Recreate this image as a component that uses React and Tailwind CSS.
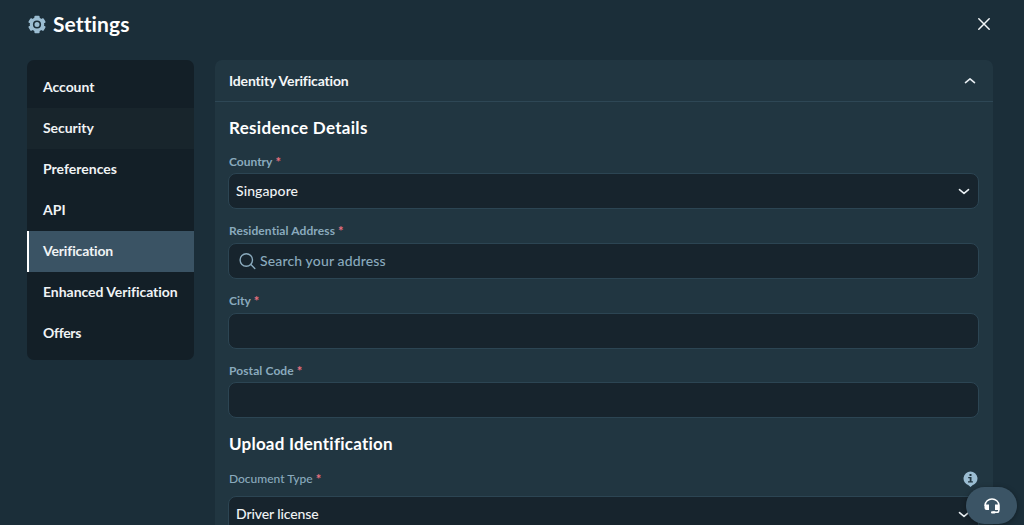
const navItems = [
  { label: 'Account', track: 'tracking-[-0.05px]' },
  { label: 'Security', track: 'tracking-[-0.05px]', hover: true },
  { label: 'Preferences', track: 'tracking-[0px]' },
  { label: 'API', track: 'tracking-[0px]' },
  { label: 'Verification', track: 'tracking-[-0.15px]', active: true },
  { label: 'Enhanced Verification', track: 'tracking-[-0.04px]' },
  { label: 'Offers', track: 'tracking-[-0.3px]' },
];

function Gear() {
  return (
    <svg className="h-[19px] w-[18px]" viewBox="0 0 18 19" fill="none">
      <g fill="#9bbdd2">
        <circle cx="9" cy="9.5" r="7.2" />
        <rect x="6.4" y="0.7" width="5.2" height="17.6" rx="1" />
        <rect x="6.4" y="0.7" width="5.2" height="17.6" rx="1" transform="rotate(60 9 9.5)" />
        <rect x="6.4" y="0.7" width="5.2" height="17.6" rx="1" transform="rotate(120 9 9.5)" />
      </g>
      <circle cx="9" cy="9.5" r="3.3" stroke="#1b2e39" strokeWidth="1.6" />
    </svg>
  );
}

function Chevron({ up }) {
  return (
    <svg className="h-[7px] w-[12px] shrink-0" viewBox="0 0 12 7" fill="none" stroke="#e8eef2" strokeWidth="1.6" strokeLinecap="round" strokeLinejoin="round">
      <path d={up ? 'M1.5 5.6L6 1.8l4.5 3.8' : 'M1.5 1.6L6 5.4l4.5-3.8'} />
    </svg>
  );
}

function Label({ children, className = 'font-bold', track = 'tracking-[0.1px]' }) {
  return (
    <div className={`flex h-[16px] items-center whitespace-nowrap text-[12px] leading-[16px] text-[#8aaabd] ${className}`}>
      <span className={track}>{children}</span>
      <span className="ml-[3px] text-[13px] font-bold text-[#e9707f]">*</span>
    </div>
  );
}

function Field({ children, className = '' }) {
  return (
    <div className={`flex h-[36px] shrink-0 items-center rounded-[8px] border border-[#2c4553] bg-[#17242d] text-[14px] font-medium text-[#f0f3f5] ${className}`}>
      {children}
    </div>
  );
}

export default function App() {
  return (
    <div className="relative h-[525px] w-[1024px] overflow-hidden bg-[#1b2e39] font-['Lato',sans-serif]">
      <header className="flex h-[60px] items-start pl-[28px] pr-[34px] pt-[12px]">
        <div className="flex h-[25px] items-center">
          <Gear />
          <h1 className="ml-[7px] pb-[2px] text-[21px] font-bold leading-[25px] tracking-[0.1px] text-white">Settings</h1>
        </div>
        <svg className="ml-auto mt-[6px] h-[12px] w-[12px]" viewBox="0 0 12 12" stroke="#f2f5f7" strokeWidth="1.5" strokeLinecap="round">
          <path d="M0.8 0.8l10.4 10.4M11.2 0.8L0.8 11.2" />
        </svg>
      </header>

      <div className="flex items-start pl-[27px]">
        <nav className="h-[300px] w-[167px] shrink-0 rounded-[7px] bg-[#131f27] pt-[7px]">
          {navItems.map((item) => (
            <div
              key={item.label}
              className={`flex h-[41px] items-center whitespace-nowrap border-l-2 pb-[2px] pl-[14px] text-[14px] font-bold text-[#f0f3f5] ${
                item.active ? 'border-white bg-[#3a5364]' : item.hover ? 'border-transparent bg-[#18252c]' : 'border-transparent'
              }`}
            >
              <span className={item.track}>{item.label}</span>
            </div>
          ))}
        </nav>

        <main className="ml-[21px] h-[480px] w-[778px] rounded-t-[7px] bg-[#213641]">
          <div className="flex h-[42px] items-center border-b border-[#2e4755] pl-[14px] pr-[17px]">
            <span className="text-[14px] font-bold tracking-[-0.16px] text-[#f4f6f8]">Identity Verification</span>
            <span className="ml-auto flex"><Chevron up /></span>
          </div>
          <div className="flex flex-col pl-[13px] pr-[14px]">
            <h2 className="mt-[15px] h-[22px] pl-px text-[17px] font-bold leading-[22px] tracking-[0.3px] text-white">Residence Details</h2>
            <div className="mt-[15px] pl-px"><Label track="tracking-[0px]">Country</Label></div>
            <Field className="mt-[3px] justify-between pl-[7px] pr-[8px]">
              <span className="pb-[2px] tracking-[0.1px]">Singapore</span>
              <Chevron />
            </Field>
            <div className="mt-[14px] pl-px"><Label>Residential Address</Label></div>
            <Field className="mt-[4px] pb-[2px] pl-[10px]">
              <svg className="mt-[2px] h-[17px] w-[17px]" viewBox="0 0 17 17" fill="none" stroke="#8aaabd" strokeWidth="1.4" strokeLinecap="round">
                <circle cx="7.3" cy="7" r="6.2" />
                <path d="M11.9 11.5l3.9 3.9" />
              </svg>
              <span className="ml-[4px] tracking-[0.15px] text-[#8aaabd]">Search your address</span>
            </Field>
            <div className="mt-[14px] pl-px"><Label track="tracking-[0px]">City</Label></div>
            <Field className="mt-[4px]" />
            <div className="mt-[14px] pl-px"><Label>Postal Code</Label></div>
            <Field className="mt-[3px]" />
            <h2 className="mt-[15px] h-[22px] pl-px text-[17px] font-bold leading-[22px] tracking-[0.22px] text-white">Upload Identification</h2>
            <div className="mt-[15px] flex h-[18px] items-center justify-between pl-px pr-px">
              <Label className="font-medium" track="tracking-[0px]">Document Type</Label>
              <svg className="h-[16px] w-[15px]" viewBox="0 0 15 16">
                <path d="M7.5 0.5a7 7 0 0 1 2 13.7L7.5 16l-2-1.8A7 7 0 0 1 7.5.5z" fill="#9bbdd2" />
                <path d="M6.5 3.1h2v1.8h-2zM5.2 6h3.3v4.2h1.4v1.3H5v-1.3h1.7V7.3H5.2z" fill="#213641" />
              </svg>
            </div>
            <Field className="mt-[8px] justify-between pl-[7px] pr-[8px]">
              <span className="pb-px tracking-[-0.1px]">Driver license</span>
              <Chevron />
            </Field>
          </div>
        </main>
      </div>

      <button className="absolute left-[966px] top-[487px] flex h-[37px] w-[51px] items-center justify-center rounded-full bg-[#3b5465] shadow-[0_1px_5px_rgba(0,0,0,0.35)]">
        <svg className="h-[16px] w-[16px]" viewBox="0 0 16 16" fill="none">
          <path d="M1.2 8V7.2a6.8 6.2 0 0 1 13.6 0V12.5a1.8 1.8 0 0 1-1.8 1.8H9" stroke="#fff" strokeWidth="1.5" />
          <path d="M.5 6.5h4.500v5.500H2.500a2 2 0 0 1-2-2zM15.500 6.500H11V12h4.500z" fill="#fff" />
          <rect x="7" y="13.2" width="4.5" height="2.3" rx="1" fill="#fff" />
        </svg>
      </button>
    </div>
  );
}
